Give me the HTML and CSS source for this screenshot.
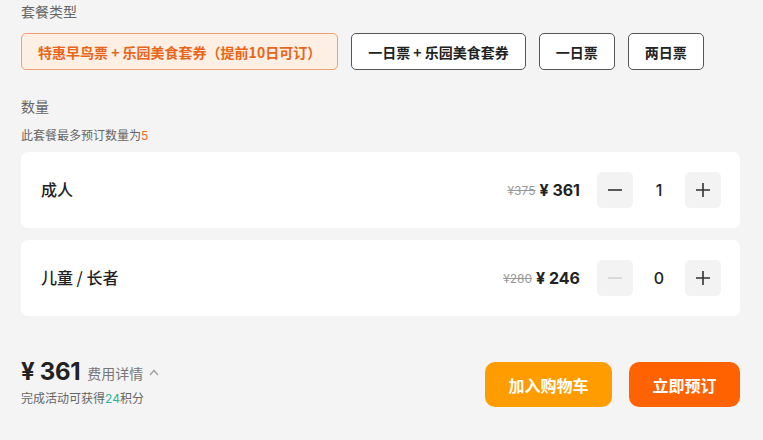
FILE: index.html
```html
<!DOCTYPE html>
<html lang="zh-CN">
<head>
<meta charset="utf-8">
<link rel="stylesheet" href="styles.css">
</head>
<body>
<div class="page">
  <div class="label">套餐类型</div>
  <div class="options">
    <div class="opt opt-active">特惠早鸟票 + 乐园美食套券（提前10日可订）</div>
    <div class="opt">一日票 + 乐园美食套券</div>
    <div class="opt">一日票</div>
    <div class="opt">两日票</div>
  </div>
  <div class="label label-qty">数量</div>
  <div class="hint">此套餐最多预订数量为<span class="hl">5</span></div>
  <div class="cards">
    <div class="card">
      <div class="name">成人</div>
      <div class="right">
        <span class="old">¥375</span>
        <span class="price">¥ 361</span>
        <div class="stepper">
          <div class="step">
            <svg width="14" height="14" viewBox="0 0 14 14"><path d="M0 7h14" stroke="#333" stroke-width="1.6"/></svg>
          </div>
          <div class="count">1</div>
          <div class="step">
            <svg width="14" height="14" viewBox="0 0 14 14"><path d="M0 7h14M7 0v14" stroke="#333" stroke-width="1.6"/></svg>
          </div>
        </div>
      </div>
    </div>
    <div class="card">
      <div class="name">儿童 / 长者</div>
      <div class="right">
        <span class="old">¥280</span>
        <span class="price">¥ 246</span>
        <div class="stepper">
          <div class="step">
            <svg width="14" height="14" viewBox="0 0 14 14"><path d="M0 7h14" stroke="#d4d4d4" stroke-width="1.6"/></svg>
          </div>
          <div class="count">0</div>
          <div class="step">
            <svg width="14" height="14" viewBox="0 0 14 14"><path d="M0 7h14M7 0v14" stroke="#333" stroke-width="1.6"/></svg>
          </div>
        </div>
      </div>
    </div>
  </div>
  <div class="footer">
    <div class="summary">
      <div class="total-row">
        <span class="total">¥ 361</span>
        <span class="detail">费用详情</span>
        <svg class="caret" width="10" height="7" viewBox="0 0 10 7"><path d="M1 6l4-4.5L9 6" fill="none" stroke="#999" stroke-width="1.2"/></svg>
      </div>
      <div class="points">完成活动可获得<span class="green">24</span>积分</div>
    </div>
    <div class="actions">
      <div class="btn btn-cart">加入购物车</div>
      <div class="btn btn-buy">立即预订</div>
    </div>
  </div>
</div>
</body>
</html>
```
FILE: styles.css
```css
* { box-sizing: border-box; }
html, body {
  margin: 0;
  padding: 0;
  background: #f4f4f4;
}
body {
  font-family: "Noto Sans CJK SC", "Noto Sans", sans-serif;
  color: #333;
  width: 763px;
  height: 440px;
  overflow: hidden;
}
.page {
  padding: 1px 23px 0 21px;
}
.label {
  font-size: 14px;
  line-height: 20px;
  color: #666;
}
.options {
  display: flex;
  gap: 13px;
  margin-top: 12px;
}
.opt {
  height: 37px;
  padding: 0 16px;
  border: 1px solid #555;
  border-radius: 5px;
  background: #fff;
  font-size: 14px;
  font-weight: 700;
  color: #222;
  display: flex;
  align-items: center;
  justify-content: center;
}
.opt-active {
  border-color: #f0a070;
  background: #fdefe4;
  color: #e8661a;
}
.label-qty {
  margin-top: 26px;
}
.hint {
  margin-top: 10px;
  font-size: 12px;
  line-height: 18px;
  color: #666;
}
.hl { color: #f0661a; font-family: Inter, sans-serif; }
.cards {
  margin-top: 7px;
  display: flex;
  flex-direction: column;
  gap: 12px;
}
.card {
  height: 76px;
  background: #fff;
  border-radius: 7px;
  display: flex;
  align-items: center;
  justify-content: space-between;
  padding: 0 19px 0 20px;
}
.name {
  font-size: 16px;
  line-height: 20px;
  font-weight: 500;
  color: #222;
  margin-top: -2px;
}
.right {
  display: flex;
  align-items: center;
}
.old {
  font-family: Inter, sans-serif;
  font-size: 12px;
  color: #999;
  text-decoration: line-through;
}
.price {
  font-family: Inter, sans-serif;
  font-size: 16px;
  font-weight: 700;
  color: #222;
  margin-left: 4px;
}
.stepper {
  display: flex;
  align-items: center;
  margin-left: 17px;
}
.step {
  width: 36px;
  height: 36px;
  border-radius: 5px;
  background: #f3f3f3;
  display: flex;
  align-items: center;
  justify-content: center;
}
.count {
  width: 52px;
  text-align: center;
  font-family: Inter, sans-serif;
  font-size: 16px;
  font-weight: 500;
  color: #222;
}
.footer {
  margin-top: 40px;
  display: flex;
  justify-content: space-between;
  align-items: flex-start;
}
.total-row {
  display: flex;
  align-items: center;
  height: 30px;
}
.total {
  font-family: Inter, sans-serif;
  font-size: 24px;
  font-weight: 700;
  color: #222;
  letter-spacing: -0.3px;
}
.detail {
  margin-left: 7px;
  font-size: 14px;
  color: #777;
  padding-top: 4px;
}
.caret {
  margin-left: 6px;
  margin-top: 2px;
}
.points {
  margin-top: 3px;
  font-size: 12px;
  line-height: 18px;
  color: #666;
}
.green { color: #2cb59b; font-family: Inter, sans-serif; }
.actions {
  display: flex;
  gap: 17px;
  margin-top: 6px;
}
.btn {
  height: 45px;
  border-radius: 10px;
  display: flex;
  align-items: center;
  justify-content: center;
  color: #fff;
  font-size: 16px;
  font-weight: 700;
}
.btn-cart {
  width: 127px;
  background: #ff9c00;
}
.btn-buy {
  width: 111px;
  background: #ff6200;
}
```
